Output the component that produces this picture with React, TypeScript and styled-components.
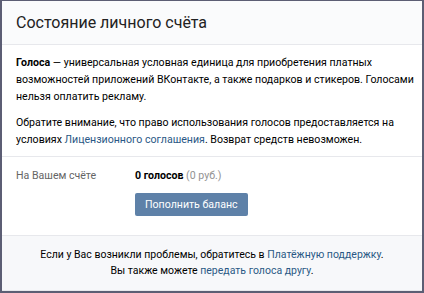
import React from 'react';
import styled, { createGlobalStyle } from 'styled-components';

const GlobalStyle = createGlobalStyle`
  html, body {
    margin: 0;
    padding: 0;
    background: #fff;
  }
  body {
    font-family: Roboto, "Open Sans", "Liberation Sans", sans-serif;
    -webkit-font-smoothing: antialiased;
  }
`;

const Frame = styled.div`
  width: 424px;
  height: 293px;
  box-sizing: border-box;
  border: 2px solid #5c5e74;
  border-top-width: 1px;
  display: flex;
  flex-direction: column;
  background: #fff;
  overflow: hidden;
`;

const Header = styled.div`
  height: 43px;
  flex-shrink: 0;
  display: flex;
  align-items: center;
  padding: 0 14px;
  background: #fafbfc;
  border-bottom: 1px solid #e7e8ec;
  font-size: 16px;
  color: #222;
`;

const Section = styled.div<{ $last?: boolean }>`
  padding: ${(p) => (p.$last ? '10px 6px 19px 14px' : '9px 6px 8px 14px')};
  border-bottom: 1px solid #e7e8ec;
  font-size: 10.6px;
  line-height: 17px;
  color: #000;
`;

const Paragraph = styled.p`
  margin: 0;
  & + & {
    margin-top: 9px;
  }
`;

const Link = styled.a`
  color: #2a5885;
  text-decoration: none;
`;

const Row = styled.div`
  display: grid;
  grid-template-columns: 119px 1fr;
  align-items: start;
`;

const Label = styled.div`
  color: #656565;
`;

const Value = styled.div`
  display: flex;
  flex-direction: column;
  align-items: flex-start;
  gap: 9px;
`;

const Amount = styled.b`
  font-weight: 700;
`;

const Muted = styled.span`
  color: #939393;
`;

const Button = styled.button`
  height: 23px;
  padding: 0 10px;
  border: 0;
  border-radius: 2px;
  background: #5e81a8;
  color: #fff;
  font-family: inherit;
  font-size: 10.6px;
  line-height: 23px;
  cursor: pointer;
`;

const Footer = styled.div`
  flex: 1;
  padding: 11px 14px 0;
  background: #f7f8fa;
  border-bottom: 1px solid #e7e8ec;
  text-align: center;
  font-size: 10.5px;
  line-height: 16px;
  color: #000;
`;

export default function App() {
  return (
    <>
      <GlobalStyle />
      <Frame>
        <Header>Состояние личного счёта</Header>
        <Section>
          <Paragraph>
            <b>Голоса</b> — универсальная условная единица для приобретения платных
            возможностей приложений ВКонтакте, а также подарков и стикеров. Голосами
            нельзя оплатить рекламу.
          </Paragraph>
          <Paragraph>
            Обратите внимание, что право использования голосов предоставляется на
            условиях <Link href="#">Лицензионного соглашения</Link>. Возврат средств
            невозможен.
          </Paragraph>
        </Section>
        <Section $last>
          <Row>
            <Label>На Вашем счёте</Label>
            <Value>
              <span>
                <Amount>0 голосов</Amount> <Muted>(0 руб.)</Muted>
              </span>
              <Button>Пополнить баланс</Button>
            </Value>
          </Row>
        </Section>
        <Footer>
          Если у Вас возникли проблемы, обратитесь в{' '}
          <Link href="#">Платёжную поддержку</Link>.
          <br />
          Вы также можете <Link href="#">передать голоса другу</Link>.
        </Footer>
      </Frame>
    </>
  );
}
